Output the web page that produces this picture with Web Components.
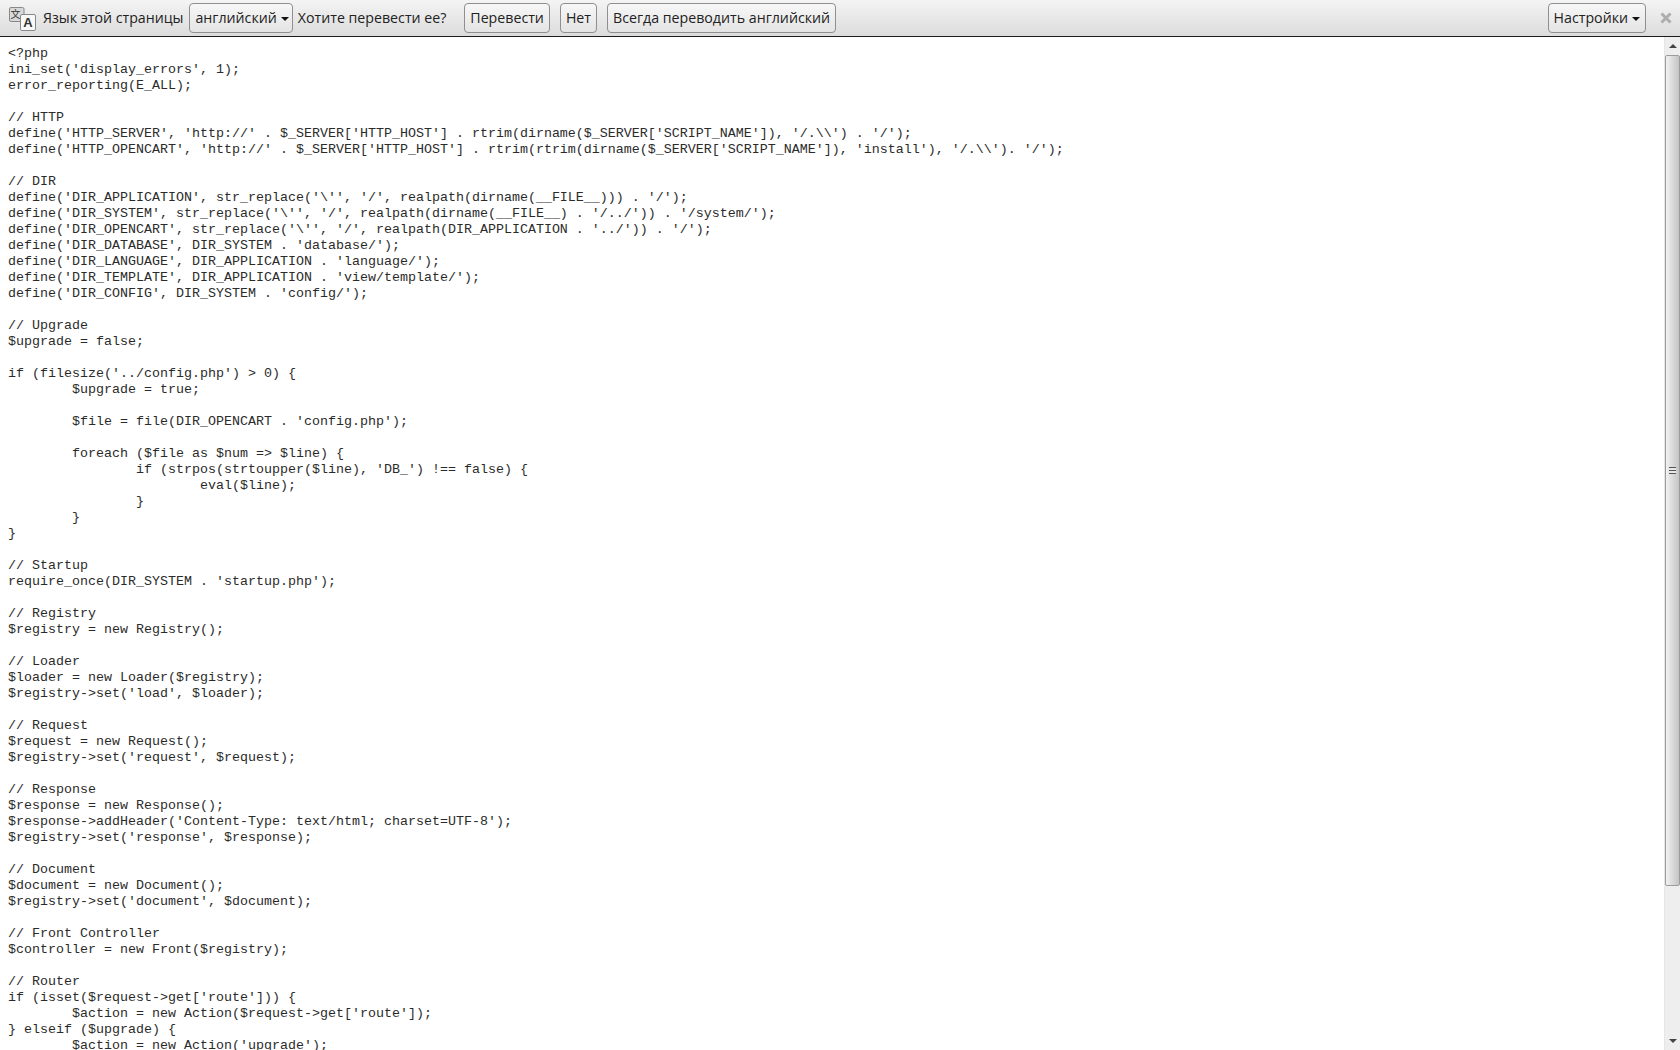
<!DOCTYPE html>
<html lang="ru">
<head>
<meta charset="utf-8">
<title>index.php</title>
<style>
  html, body { margin: 0; height: 100%; overflow: hidden; background: #fff; }
  body { display: flex; flex-direction: column; }
</style>
</head>
<body>
<translate-bar>
  <translate-icon></translate-icon>
  <bar-label style="margin-left:7px">Язык этой страницы</bar-label>
  <bar-button menu style="margin-left:6px;padding-right:3px">английский</bar-button>
  <bar-label style="margin-left:5px">Хотите перевести ее?</bar-label>
  <bar-button style="margin-left:18px">Перевести</bar-button>
  <bar-button style="margin-left:10px">Нет</bar-button>
  <bar-button style="margin-left:10px">Всегда переводить английский</bar-button>
  <bar-button slot="end" menu>Настройки</bar-button>
  <bar-close slot="end"></bar-close>
</translate-bar>
<source-view><pre>&lt;?php
ini_set('display_errors', 1);
error_reporting(E_ALL);

// HTTP
define('HTTP_SERVER', 'http://' . $_SERVER['HTTP_HOST'] . rtrim(dirname($_SERVER['SCRIPT_NAME']), '/.\\') . '/');
define('HTTP_OPENCART', 'http://' . $_SERVER['HTTP_HOST'] . rtrim(rtrim(dirname($_SERVER['SCRIPT_NAME']), 'install'), '/.\\'). '/');

// DIR
define('DIR_APPLICATION', str_replace('\'', '/', realpath(dirname(__FILE__))) . '/');
define('DIR_SYSTEM', str_replace('\'', '/', realpath(dirname(__FILE__) . '/../')) . '/system/');
define('DIR_OPENCART', str_replace('\'', '/', realpath(DIR_APPLICATION . '../')) . '/');
define('DIR_DATABASE', DIR_SYSTEM . 'database/');
define('DIR_LANGUAGE', DIR_APPLICATION . 'language/');
define('DIR_TEMPLATE', DIR_APPLICATION . 'view/template/');
define('DIR_CONFIG', DIR_SYSTEM . 'config/');

// Upgrade
$upgrade = false;

if (filesize('../config.php') > 0) {
	$upgrade = true;

	$file = file(DIR_OPENCART . 'config.php');

	foreach ($file as $num => $line) {
		if (strpos(strtoupper($line), 'DB_') !== false) {
			eval($line);
		}
	}
}

// Startup
require_once(DIR_SYSTEM . 'startup.php');

// Registry
$registry = new Registry();

// Loader
$loader = new Loader($registry);
$registry->set('load', $loader);

// Request
$request = new Request();
$registry->set('request', $request);

// Response
$response = new Response();
$response->addHeader('Content-Type: text/html; charset=UTF-8');
$registry->set('response', $response);

// Document
$document = new Document();
$registry->set('document', $document);

// Front Controller
$controller = new Front($registry);

// Router
if (isset($request->get['route'])) {
	$action = new Action($request->get['route']);
} elseif ($upgrade) {
	$action = new Action('upgrade');
}
</pre></source-view>
<script>
class TranslateBar extends HTMLElement {
  constructor() {
    super();
    this.attachShadow({ mode: 'open' }).innerHTML = `
      <style>
        :host {
          display: flex; align-items: center; justify-content: space-between;
          flex: none; box-sizing: border-box; height: 37px; padding: 0 8px 1px 9px;
          border-bottom: 1px solid #1c1c1c;
          background: linear-gradient(#f4f4f4, #dcdcdc);
          font: 14.2px "Open Sans", "Noto Sans", sans-serif; color: #222;
          white-space: nowrap;
        }
        .side { display: flex; align-items: center; }
      </style>
      <div class="side"><slot></slot></div>
      <div class="side"><slot name="end"></slot></div>`;
  }
}

class TranslateIcon extends HTMLElement {
  constructor() {
    super();
    this.attachShadow({ mode: 'open' }).innerHTML = `
      <style>
        :host { display: block; width: 27px; height: 24px; margin-top: 2px; }
        svg { display: block; }
      </style>
      <svg width="27" height="24" viewBox="0 0 27 24" fill="none">
        <rect x=".5" y=".5" width="14.500" height="14" rx="1.500" fill="#d8d8d8" stroke="#888"/>
        <text x="6.500" y="11" text-anchor="middle" fill="#333"
          font-family="'Noto Sans CJK SC', sans-serif" font-size="10">文</text>
        <rect x="11.500" y="7.500" width="15" height="16" rx="1.500" fill="#f8f8f8" stroke="#888"/>
        <text x="19" y="20" text-anchor="middle" fill="#333"
          font-family="'Liberation Sans', sans-serif" font-size="13" font-weight="700">A</text>
      </svg>`;
  }
}

class BarLabel extends HTMLElement {
  constructor() {
    super();
    this.attachShadow({ mode: 'open' }).innerHTML = `
      <style>:host { display: block; }</style><slot></slot>`;
  }
}

class BarButton extends HTMLElement {
  constructor() {
    super();
    const menu = this.hasAttribute('menu');
    this.attachShadow({ mode: 'open' }).innerHTML = `
      <style>
        :host {
          display: flex; align-items: center; box-sizing: border-box;
          height: 30px; padding: 0 5px;
          border: 1px solid #8f8f8f; border-radius: 4px;
          background: linear-gradient(#f7f7f7, #e4e4e4);
        }
        .caret {
          width: 0; height: 0; margin: 2px 0 0 4px;
          border: 4px solid transparent; border-top: 4px solid #111; border-bottom: 0;
        }
      </style>
      <slot></slot>${menu ? '<span class="caret"></span>' : ''}`;
  }
}

class BarClose extends HTMLElement {
  constructor() {
    super();
    this.attachShadow({ mode: 'open' }).innerHTML = `
      <style>
        :host { display: block; width: 12px; height: 12px; margin-left: 14px; }
        svg { display: block; }
      </style>
      <svg width="12" height="12" viewBox="0 0 12 12">
        <path d="M1.500 1.500L10.500 10.500M10.500 1.500L1.500 10.500" stroke="#adadad" stroke-width="3"/>
      </svg>`;
  }
}

class SourceView extends HTMLElement {
  constructor() {
    super();
    this.attachShadow({ mode: 'open' }).innerHTML = `
      <style>
        :host { display: flex; flex: 1; min-height: 0; }
        .text {
          flex: 1; min-width: 0; overflow: hidden; padding: 9px 8px 0;
          background: #fff;
        }
        ::slotted(pre) {
          margin: 0; tab-size: 8; color: #2b2b2b;
          font: 13.33px/16px "Liberation Mono", "Courier New", monospace;
        }
      </style>
      <div class="text"><slot></slot></div>
      <page-scrollbar></page-scrollbar>`;
  }
}

class PageScrollbar extends HTMLElement {
  constructor() {
    super();
    this.attachShadow({ mode: 'open' }).innerHTML = `
      <style>
        :host {
          display: flex; flex-direction: column; flex: none; box-sizing: border-box;
          width: 16px; background: #eeeeee; border-left: 1px solid #e6e6e6;
        }
        .arrow { display: flex; align-items: center; justify-content: center; flex: none; height: 18px; }
        .arrow i { width: 0; height: 0; border: 4px solid transparent; border-top: 0; border-bottom: 4px solid #444; }
        .arrow.down i { border-bottom: 0; border-top: 4px solid #444; }
        .thumb {
          display: flex; align-items: center; justify-content: center; flex: none;
          box-sizing: border-box; height: 831px;
          border: 1px solid #9c9c9c; border-radius: 2px;
          background: linear-gradient(90deg, #f2f2f2, #d8d8d8 55%, #c4c4c4);
        }
        .grip { width: 7px; height: 7px; background: repeating-linear-gradient(#555 0 1px, #e8e8e8 1px 3px); }
        .rest { flex: 1; }
      </style>
      <div class="arrow"><i></i></div>
      <div class="thumb"><div class="grip"></div></div>
      <div class="rest"></div>
      <div class="arrow down"><i></i></div>`;
  }
}

customElements.define('translate-bar', TranslateBar);
customElements.define('translate-icon', TranslateIcon);
customElements.define('bar-label', BarLabel);
customElements.define('bar-button', BarButton);
customElements.define('bar-close', BarClose);
customElements.define('source-view', SourceView);
customElements.define('page-scrollbar', PageScrollbar);
</script>
</body>
</html>
